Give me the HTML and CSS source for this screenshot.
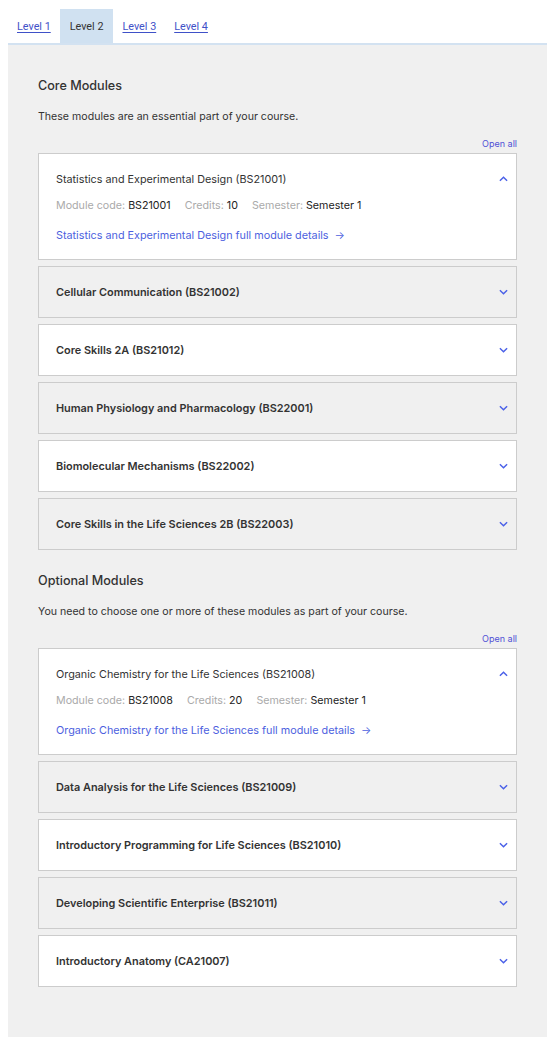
FILE: index.html
```html
<!DOCTYPE html>
<html>
<head>
<meta charset="utf-8">
<link rel="stylesheet" href="styles.css">
</head>
<body>
<nav class="tabs">
  <a class="tab" href="#">Level 1</a>
  <span class="tab active">Level 2</span>
  <a class="tab" href="#">Level 3</a>
  <a class="tab" href="#">Level 4</a>
</nav>
<main class="panel">
  <section class="group">
    <h2 class="group-title">Core Modules</h2>
    <p class="group-desc">These modules are an essential part of your course.</p>
    <div class="open-all"><a href="#">Open all</a></div>
    <div class="cards">
      <div class="card open">
        <div class="card-head"><span class="card-title">Statistics and Experimental Design (BS21001)</span><svg class="chev" viewBox="0 0 10 6"><path d="M1 5 L5 1 L9 5"/></svg></div>
        <div class="meta"><span class="lbl">Module code:</span> BS21001<span class="lbl sp">Credits:</span> 10<span class="lbl sp">Semester:</span> Semester 1</div>
        <a class="details" href="#">Statistics and Experimental Design full module details <span class="arrow">→</span></a>
      </div>
      <div class="card"><div class="card-head"><span class="card-title">Cellular Communication (BS21002)</span><svg class="chev" viewBox="0 0 10 6"><path d="M1 1 L5 5 L9 1"/></svg></div></div>
      <div class="card"><div class="card-head"><span class="card-title">Core Skills 2A (BS21012)</span><svg class="chev" viewBox="0 0 10 6"><path d="M1 1 L5 5 L9 1"/></svg></div></div>
      <div class="card"><div class="card-head"><span class="card-title">Human Physiology and Pharmacology (BS22001)</span><svg class="chev" viewBox="0 0 10 6"><path d="M1 1 L5 5 L9 1"/></svg></div></div>
      <div class="card"><div class="card-head"><span class="card-title">Biomolecular Mechanisms (BS22002)</span><svg class="chev" viewBox="0 0 10 6"><path d="M1 1 L5 5 L9 1"/></svg></div></div>
      <div class="card"><div class="card-head"><span class="card-title">Core Skills in the Life Sciences 2B (BS22003)</span><svg class="chev" viewBox="0 0 10 6"><path d="M1 1 L5 5 L9 1"/></svg></div></div>
    </div>
  </section>
  <section class="group">
    <h2 class="group-title">Optional Modules</h2>
    <p class="group-desc">You need to choose one or more of these modules as part of your course.</p>
    <div class="open-all"><a href="#">Open all</a></div>
    <div class="cards">
      <div class="card open">
        <div class="card-head"><span class="card-title">Organic Chemistry for the Life Sciences (BS21008)</span><svg class="chev" viewBox="0 0 10 6"><path d="M1 5 L5 1 L9 5"/></svg></div>
        <div class="meta"><span class="lbl">Module code:</span> BS21008<span class="lbl sp">Credits:</span> 20<span class="lbl sp">Semester:</span> Semester 1</div>
        <a class="details" href="#">Organic Chemistry for the Life Sciences full module details <span class="arrow">→</span></a>
      </div>
      <div class="card"><div class="card-head"><span class="card-title">Data Analysis for the Life Sciences (BS21009)</span><svg class="chev" viewBox="0 0 10 6"><path d="M1 1 L5 5 L9 1"/></svg></div></div>
      <div class="card"><div class="card-head"><span class="card-title">Introductory Programming for Life Sciences (BS21010)</span><svg class="chev" viewBox="0 0 10 6"><path d="M1 1 L5 5 L9 1"/></svg></div></div>
      <div class="card"><div class="card-head"><span class="card-title">Developing Scientific Enterprise (BS21011)</span><svg class="chev" viewBox="0 0 10 6"><path d="M1 1 L5 5 L9 1"/></svg></div></div>
      <div class="card"><div class="card-head"><span class="card-title">Introductory Anatomy (CA21007)</span><svg class="chev" viewBox="0 0 10 6"><path d="M1 1 L5 5 L9 1"/></svg></div></div>
    </div>
  </section>
</main>
</body>
</html>
```
FILE: styles.css
```css
body {
  margin: 8px;
  font-family: "Inter", "Liberation Sans", sans-serif;
  color: #333;
  background: #fff;
}
.tabs {
  display: flex;
  height: 34px;
  padding-top: 1px;
  border-bottom: 2px solid #d3e2f1;
}
.tab {
  font-family: "Roboto", sans-serif;
  font-size: 10.8px;
  line-height: 34px;
  height: 34px;
  padding: 1px 9px 0;
  box-sizing: border-box;
  color: #3f51c8;
  text-decoration: underline;
  text-underline-offset: 2px;
}
.tab.active {
  background: #d0e1f1;
  color: #333;
  text-decoration: none;
  padding: 1px 10px 0;
}
.panel {
  background: #f0f0f0;
  padding: 30px 30px 50px;
}
.group + .group { margin-top: 20px; }
.group-title {
  margin: 0;
  font-size: 12.6px;
  line-height: 22px;
  height: 20px;
  font-weight: 500;
  color: #333;
}
.group-desc {
  margin: 12px 0 0;
  font-size: 10.6px;
  line-height: 19px;
  height: 16px;
  color: #333;
}
.open-all {
  margin-top: 13px;
  text-align: right;
  font-size: 9px;
  line-height: 16px;
  height: 14px;
}
.open-all a { color: #5050d6; text-decoration: none; }
.cards {
  margin-top: 3px;
  display: flex;
  flex-direction: column;
  gap: 6px;
}
.card {
  border: 1px solid #cccccc;
  background: #fff;
  padding: 17px 8px 17px 17px;
}
.card.open { padding-bottom: 15px; }
.card:nth-child(even) { background: #f0f0f0; }
.card-head {
  display: flex;
  align-items: center;
  height: 16px;
}
.card-title {
  flex: 1;
  font-size: 10.9px;
  font-weight: 600;
  color: #333;
}
.card.open .card-title { font-weight: 400; font-size: 10.8px; }
.chev {
  width: 9px;
  height: 6px;
  fill: none;
  stroke: #4a60e8;
  stroke-width: 1.6;
}
.meta {
  margin-top: 11px;
  font-size: 10.7px;
  line-height: 16px;
  height: 16px;
  color: #222;
}
.lbl { color: #aaa; }
.lbl.sp { margin-left: 14px; }
.details {
  display: block;
  margin-top: 14px;
  font-size: 10.8px;
  line-height: 16px;
  height: 16px;
  color: #4d5fe0;
  text-decoration: none;
  white-space: nowrap;
}
.arrow { margin-left: 3px; }
```
